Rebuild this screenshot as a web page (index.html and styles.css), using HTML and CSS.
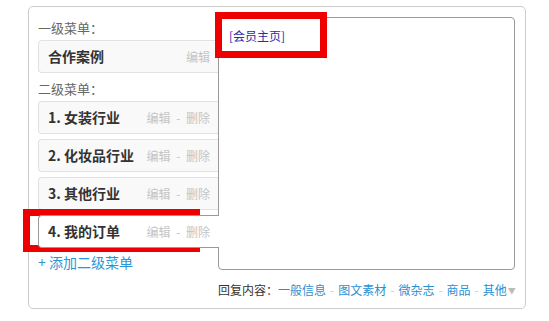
FILE: index.html
```html
<!DOCTYPE html>
<html lang="zh-CN">

<head>
    <meta charset="UTF-8">
    <title>自定义菜单</title>
    <link rel="stylesheet" href="styles.css">
</head>

<body>
    <div class="menu-panel">

        <div class="menu-left">
            <div class="menu-label">一级菜单：</div>
            <div class="menu-item">
                <span class="item-name">合作案例</span>
                <span class="item-ops">编辑</span>
            </div>

            <div class="menu-label">二级菜单：</div>
            <div class="menu-item">
                <span class="item-name">1. 女装行业</span>
                <span class="item-ops">编辑 - 删除</span>
            </div>
            <div class="menu-item">
                <span class="item-name">2. 化妆品行业</span>
                <span class="item-ops">编辑 - 删除</span>
            </div>
            <div class="menu-item">
                <span class="item-name">3. 其他行业</span>
                <span class="item-ops">编辑 - 删除</span>
            </div>
            <div class="menu-item active">
                <span class="item-name">4. 我的订单</span>
                <span class="item-ops">编辑 - 删除</span>
            </div>

            <a class="add-sub" href="#">+ 添加二级菜单</a>
        </div>

        <div class="menu-right">
            <div class="reply-box">
                <span class="reply-link">[会员主页]</span>
            </div>
            <div class="reply-types">
                回复内容：<a href="#">一般信息</a><span class="sep">-</span><a href="#">图文素材</a><span class="sep">-</span><a href="#">微杂志</a><span class="sep">-</span><a href="#">商品</a><span class="sep">-</span><a href="#">其他</a><span class="caret">▼</span>
            </div>
        </div>

    </div>

    <!-- пометки поверх скриншота -->
    <div class="mark mark-top"></div>
    <div class="mark mark-item"></div>
</body>

</html>
```

FILE: styles.css
```css
body {
    margin: 0;
    padding: 0;
    font-family: "Noto Sans CJK SC", "Liberation Sans", sans-serif;
    font-size: 13px;
    color: #333;
    background-color: #fff;
}

a {
    text-decoration: none;
}

.menu-panel {
    display: flex;
    box-sizing: border-box;
    width: 498px;
    height: 303px;
    margin: 6px 0 0 28px;
    padding: 10px 10px 0 9px;
    border: 1px solid #ccc;
    border-radius: 5px;
}

.menu-left {
    width: 180px;
    display: flex;
    flex-direction: column;
}

.menu-label {
    height: 23px;
    line-height: 21px;
    color: #666;
    font-size: 13px;
}

.menu-item {
    box-sizing: border-box;
    height: 33px;
    margin-bottom: 5px;
    padding: 0 8px 1px 9px;
    display: flex;
    align-items: center;
    justify-content: space-between;
    background-color: #f9f9f9;
    border: 1px solid #e2e2e2;
    border-right: none;
    border-radius: 4px 0 0 4px;
}

.item-name {
    font-size: 14px;
    font-weight: bold;
    color: #333;
}

.item-ops {
    font-size: 12px;
    color: #c4c4c4;
    word-spacing: 3px;
}

.menu-item.active {
    position: relative;
    z-index: 1;
    margin-right: -1px;
    padding-right: 9px;
    background-color: #fff;
    border-color: #999;
}

.add-sub {
    display: block;
    height: 20px;
    line-height: 18px;
    color: #2b95d6;
    font-size: 14px;
}

.menu-right {
    width: 297px;
    display: flex;
    flex-direction: column;
}

.reply-box {
    box-sizing: border-box;
    height: 253px;
    padding: 8px 10px;
    border: 1px solid #999;
    border-radius: 4px;
    line-height: 20px;
}

.reply-link {
    font-size: 12px;
    color: #2d2da6;
}

.reply-types {
    margin-top: 10px;
    height: 20px;
    line-height: 20px;
    font-size: 12px;
    color: #333;
    text-align: right;
    white-space: nowrap;
    padding-right: 1px;
}

.reply-types a {
    color: #2b8fd2;
}

.sep {
    color: #ccc;
    margin: 0 4px;
}

.caret {
    color: #bbb;
    font-size: 8px;
    margin-left: 1px;
    vertical-align: 1px;
}

.mark {
    position: absolute;
    box-sizing: border-box;
    border: 7px solid #ee0000;
}

.mark-top {
    left: 215px;
    top: 12px;
    width: 112px;
    height: 46px;
}

.mark-item {
    left: 23px;
    top: 209px;
    width: 177px;
    height: 43px;
}
```
